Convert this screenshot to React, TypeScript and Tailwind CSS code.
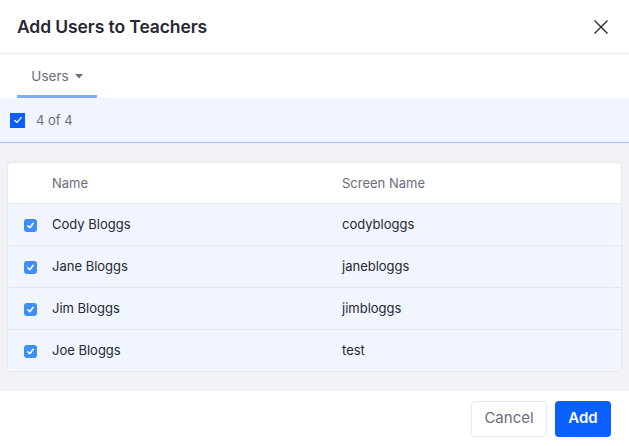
import React from "react";

const rows = [
  { name: "Cody Bloggs", screen: "codybloggs" },
  { name: "Jane Bloggs", screen: "janebloggs" },
  { name: "Jim Bloggs", screen: "jimbloggs" },
  { name: "Joe Bloggs", screen: "test" },
];

function RowCheck() {
  return (
    <span className="flex h-[13px] w-[13px] items-center justify-center rounded-[3px] bg-[#3d8ef7]">
      <svg width="9" height="9" viewBox="0 0 10 10" fill="none">
        <path d="M2 5.3 L4.2 7.5 L8 2.5" stroke="white" strokeWidth="1.7" strokeLinecap="round" strokeLinejoin="round" />
      </svg>
    </span>
  );
}

export default function App() {
  return (
    <div
      className="flex h-[446px] w-[629px] flex-col overflow-hidden bg-white text-[#272833]"
      style={{ fontFamily: "Inter, 'Noto Sans', sans-serif" }}
    >
      {/* Header */}
      <div className="flex h-[54px] shrink-0 items-center justify-between border-b border-[#e7e7ed] pl-[17px] pr-[20px]">
        <h1 className="pt-[1px] text-[17.5px] font-semibold tracking-[-0.1px] text-[#272833]">Add Users to Teachers</h1>
        <svg width="16" height="16" viewBox="0 0 16 16" fill="none">
          <path d="M1.5 1.5 L14.5 14.5 M14.5 1.5 L1.5 14.5" stroke="#272833" strokeWidth="1.4" />
        </svg>
      </div>

      {/* Tabs */}
      <div className="flex h-[44px] shrink-0 items-end pl-[17px]">
        <div className="flex h-full w-[80px] flex-col items-center justify-between">
          <div className="flex flex-1 items-center gap-[6px] pt-[3px] text-[13.5px] text-[#6b6c7e]">
            <span>Users</span>
            <svg width="8" height="5" viewBox="0 0 8 5">
              <path d="M0 0 L8 0 L4 4.5 Z" fill="#6b6c7e" />
            </svg>
          </div>
          <div className="h-[3px] w-full bg-[#80acff]" />
        </div>
      </div>

      {/* Selection bar */}
      <div className="flex h-[45px] shrink-0 items-center gap-[11px] border-b border-[#a6c4ff] bg-[#f0f5ff] pl-[10px]">
        <span className="flex h-[15px] w-[15px] items-center justify-center bg-[#0b5fff]">
          <svg width="10" height="10" viewBox="0 0 10 10" fill="none">
            <path d="M1.8 5.4 L4 7.4 L8.3 2.6" stroke="white" strokeWidth="1.3" strokeLinecap="round" strokeLinejoin="round" />
          </svg>
        </span>
        <span className="pt-[1px] text-[13px] text-[#6b6c7e]">4 of 4</span>
      </div>

      {/* Body */}
      <div className="flex h-[248px] shrink-0 flex-col bg-[#f1f2f5] px-[7px] pt-[19px]">
        <div className="overflow-hidden rounded-[4px] border border-[#e7e7ed] bg-white">
          <div className="flex h-[41px] items-center border-b border-[#e7e7ed] pt-[1px] text-[13px] text-[#6b6c7e]">
            <div className="w-[44px]" />
            <div className="w-[290px]">Name</div>
            <div>Screen Name</div>
          </div>
          {rows.map((r, i) => (
            <div
              key={r.name}
              className={`flex items-center bg-[#f0f5ff] pt-[1px] text-[13px] text-[#272833] ${i < rows.length - 1 ? "h-[42px] border-b border-[#e7e7ed]" : "h-[41px]"}`}
            >
              <div className="flex w-[44px] justify-start pl-[16px]">
                <RowCheck />
              </div>
              <div className="w-[290px]">{r.name}</div>
              <div>{r.screen}</div>
            </div>
          ))}
        </div>
      </div>

      {/* Footer */}
      <div className="flex flex-1 items-center justify-end gap-[8px] pr-[18px]">
        <button className="h-[36px] w-[76px] rounded-[4px] border border-[#e7e7ed] bg-white text-[15px] text-[#6b6c7e]">
          Cancel
        </button>
        <button className="h-[36px] w-[56px] rounded-[4px] bg-[#0b5fff] text-[15px] font-semibold text-white">
          Add
        </button>
      </div>
    </div>
  );
}
